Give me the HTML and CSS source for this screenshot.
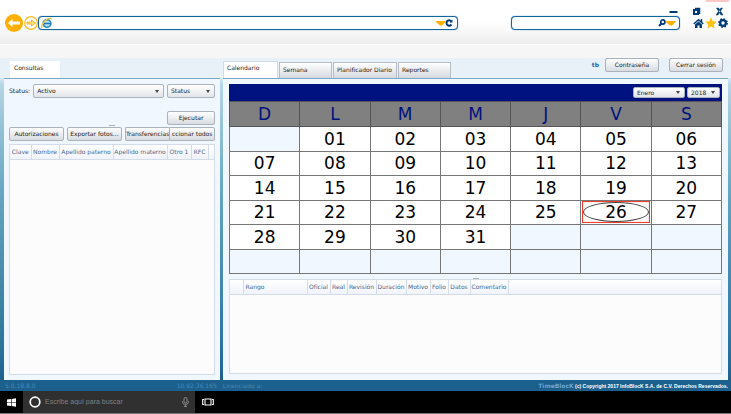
FILE: index.html
```html
<!DOCTYPE html>
<html lang="es">
<head>
<meta charset="utf-8">
<title>TimeBlocK</title>
<link rel="stylesheet" href="styles.css">
</head>
<body>
<header class="browser">
  <div class="window-buttons">
    <button aria-label="Minimizar"><svg width="9" height="9" viewBox="0 0 9 9"><path d="M.5 5h8" stroke="#003b77" stroke-width="2"/></svg></button>
    <button aria-label="Restaurar"><svg width="9" height="9" viewBox="0 0 9 9"><path d="M3 1.500h4.500V7" fill="none" stroke="#003b77" stroke-width="1.500"/><rect x="2" y="3" width="4" height="4" fill="#fff" stroke="#003b77" stroke-width="2"/></svg></button>
    <button aria-label="Cerrar"><svg width="9" height="9" viewBox="0 0 9 9"><path d="M1.500 1h2L8 8H6zM7.500 1h-1.500L1 8h2z" fill="#003b77" stroke="#003b77" stroke-width=".5"/></svg></button>
  </div>
  <nav class="nav">
    <button aria-label="Atrás"><svg width="18" height="18" viewBox="0 0 18 18"><circle cx="9" cy="9" r="9" fill="#ffb000"/><path d="M3 9l4.500-4v2.500H15v3H7.500V13z" fill="#fff"/></svg></button>
    <button aria-label="Adelante"><svg width="14" height="14" viewBox="0 0 14 14"><circle cx="7" cy="7" r="6.300" fill="#fff" stroke="#ffb91e" stroke-width="1.200"/><path d="M3 6h4.500V4l4 3-4 3V8H3z" fill="#ffe08a" stroke="#f5aa00" stroke-width=".8"/></svg></button>
    <label class="address">
      <svg width="12" height="12" viewBox="0 0 12 12"><circle cx="6" cy="6.500" r="3.800" fill="#b8e2f7" stroke="#2b8fd0" stroke-width="1.800"/><path d="M3 6.500h6.500" stroke="#2177b8" stroke-width="1.500"/><path d="M1 11C-.5 8 5 .5 10.500 1.500" fill="none" stroke="#e9c53b" stroke-width="1.300"/></svg>
      <input type="text" aria-label="Dirección">
      <svg width="17" height="10" viewBox="0 0 17 10"><path d="M0 3h9.500v1L6 7.500H4L0 4z" fill="#ffb000"/><path d="M15.500 3.500C13.500 1.300 10.500 2.500 10.500 5s3 3.800 5 1.500" fill="none" stroke="#003b77" stroke-width="2"/><path d="M13.500 4.500h3V1.800z" fill="#003b77"/></svg>
    </label>
    <label class="search">
      <input type="text" aria-label="Buscar">
      <svg width="18" height="10" viewBox="0 0 18 10"><circle cx="4.800" cy="4" r="2.100" fill="#fff" stroke="#003b77" stroke-width="1.700"/><path d="M3.500 5.500L1 8" stroke="#003b77" stroke-width="2"/><path d="M8 3h9.500v1L14 7.500h-2L8 4z" fill="#ffb000"/></svg>
    </label>
    <div class="tools">
      <button aria-label="Inicio"><svg width="11" height="11" viewBox="0 0 11 11"><path d="M.7 6L5.500 1.800 10.300 6M8.500 1v3" fill="none" stroke="#003b77" stroke-width="1.500"/><path d="M2 6.500l3.500-3 3.500 3V10H6.500V7.500h-2V10H2z" fill="#003b77"/></svg></button>
      <button aria-label="Favoritos"><svg width="12" height="12" viewBox="0 0 12 12"><path d="M6 .3l1.700 3.900 4.200.4-3.200 2.800.9 4.200L6 9.400l-3.600 2.200.9-4.200L.1 4.600l4.200-.4z" fill="#ffc20e"/></svg></button>
      <button aria-label="Configuración"><svg width="10" height="10" viewBox="0 0 10 10"><circle cx="5" cy="5" r="4" fill="none" stroke="#003b77" stroke-width="1.800" stroke-dasharray="1.600 1.542"/><circle cx="5" cy="5" r="2.800" fill="#fff" stroke="#003b77" stroke-width="2.200"/></svg></button>
    </div>
  </nav>
</header>
<div class="toolbar"></div>

<main class="app">
  <div class="columns">
    <section class="left">
      <div class="tabs"><button class="tab active query-tab">Consultas</button></div>
      <div class="panel">
        <div class="filters">
          <label for="estado">Status:</label>
          <span class="drop wide"><select id="estado"><option>Activo</option></select></span>
          <span class="drop"><select aria-label="Tipo"><option>Status</option></select></span>
        </div>
        <div class="run"><button class="btn">Ejecutar</button></div>
        <i class="grip"></i>
        <div class="actions">
          <button class="btn">Autorizaciones</button>
          <button class="btn">Exportar fotos...</button>
          <div class="joined"><button class="btn">Transferencias</button><button class="btn">ccionar todos</button></div>
        </div>
        <div class="list">
          <table>
            <colgroup><col class="w21"><col class="w28"><col class="w54"><col class="w54"><col class="w24"><col class="w17"><col></colgroup>
            <thead><tr><th>Clave</th><th>Nombre</th><th>Apellido paterno</th><th>Apellido materno</th><th>Otro 1</th><th>RFC</th><th></th></tr></thead>
          </table>
        </div>
      </div>
    </section>
    <section class="right">
      <div class="tabs">
        <button class="tab active">Calendario</button><button class="tab">Semana</button><button class="tab planner">Planificador Diario</button><button class="tab">Reportes</button>
        <div class="session"><span class="user">tb</span><button class="btn">Contraseña</button><button class="btn">Cerrar sesión</button></div>
      </div>
      <div class="panel">
        <div class="calendar">
          <div class="month">
            <span class="drop"><select class="month-select" aria-label="Mes"><option>Enero</option></select></span>
            <span class="drop"><select class="year-select" aria-label="Año"><option>2018</option></select></span>
          </div>
          <table>
            <thead><tr><th>D</th><th>L</th><th>M</th><th>M</th><th>J</th><th>V</th><th>S</th></tr></thead>
            <tbody>
              <tr><td></td><td>01</td><td>02</td><td>03</td><td>04</td><td>05</td><td>06</td></tr>
              <tr><td>07</td><td>08</td><td>09</td><td>10</td><td>11</td><td>12</td><td>13</td></tr>
              <tr><td>14</td><td>15</td><td>16</td><td>17</td><td>18</td><td>19</td><td>20</td></tr>
              <tr><td>21</td><td>22</td><td>23</td><td>24</td><td>25</td><td><div class="today"><span>26</span></div></td><td>27</td></tr>
              <tr><td>28</td><td>29</td><td>30</td><td>31</td><td></td><td></td><td></td></tr>
              <tr><td></td><td></td><td></td><td></td><td></td><td></td><td></td></tr>
            </tbody>
          </table>
        </div>
        <i class="grip"></i>
        <div class="list">
          <table>
            <colgroup><col class="w13"><col class="w64"><col class="w23"><col class="w17"><col class="w29"><col class="w30"><col class="w24"><col class="w18"><col class="w22"><col class="w38"><col></colgroup>
            <thead><tr><th></th><th class="range">Rango</th><th>Oficial</th><th>Real</th><th>Revisión</th><th>Duración</th><th>Motivo</th><th>Folio</th><th>Datos</th><th>Comentario</th><th></th></tr></thead>
          </table>
        </div>
      </div>
    </section>
  </div>
  <footer class="status">
    <div class="status-left"><span>5.0.18.8.0</span><span>10.92.36.165</span></div>
    <span>Licenciado a:</span>
    <p><b>TimeBlocK</b> (c) Copyright 2017 InfoBlocK S.A. de C.V. Derechos Reservados.</p>
  </footer>
</main>

<div class="taskbar">
  <button class="start" aria-label="Inicio de Windows"><svg width="9" height="9" viewBox="0 0 9 9"><path d="M0 1.500L4 1v3.200H0zM4.600.9L9 .3v3.900H4.600zM0 4.800h4V8l-4-.5zM4.600 4.800H9v3.900L4.600 8z" fill="#fff"/></svg></button>
  <label class="cortana">
    <svg width="12" height="12" viewBox="0 0 12 12"><circle cx="6" cy="6" r="4.800" fill="none" stroke="#fff" stroke-width="1.700"/></svg>
    <input type="text" placeholder="Escribe aquí para buscar" aria-label="Buscar en Windows">
    <svg width="7" height="10" viewBox="0 0 7 10"><rect x="2" y=".5" width="3" height="5.500" rx="1.500" fill="none" stroke="#999" stroke-width=".9"/><path d="M.7 4v1.500q0 2 2.800 2t2.800-2V4M3.500 7.500v2M2 9.500h3" fill="none" stroke="#999" stroke-width=".8"/></svg>
  </label>
  <button class="views" aria-label="Vista de tareas"><svg width="12" height="8" viewBox="0 0 12 8"><path d="M3 1h6v6H3zM2 1.500H.7v5H2M10 1.500h1.300v5H10" fill="none" stroke="#fff" stroke-width="1.100"/></svg></button>
</div>
</body>
</html>
```
FILE: styles.css
```css
* { box-sizing: border-box; }
body {
  margin: 0;
  min-height: 100vh;
  display: flex;
  flex-direction: column;
  font: 6px/8px "DejaVu Sans", sans-serif;
  color: #222;
  background: #fff;
}
button, input, select { font: inherit; color: inherit; margin: 0; padding: 0; border: 0; background: none; }
svg { display: block; flex: none; }

.browser { height: 44px; padding: 7px 3px 0 5px; background: linear-gradient(#fff 50%, #ededed); position: relative; }
.browser::after { content: ""; position: absolute; top: 0; right: 2px; width: 23px; height: 2px; background: #fbc8c8; }
.window-buttons { display: flex; justify-content: flex-end; gap: 14px; height: 7px; padding-right: 4px; }
.nav { display: flex; align-items: center; height: 18px; }
.nav > button + button { margin-left: 1px; }
.address, .search { display: flex; align-items: center; height: 14px; border: 1px solid #11669b; border-radius: 4px; background: #fff; box-shadow: 0 0 1px #11669b; }
.address { flex: 424; padding: 0 4px 0 2px; }
.search { flex: 165; margin-left: 53px; padding: 0 3px; }
.address input, .search input { flex: 1; min-width: 0; }
.tools { display: flex; align-items: center; gap: 1px; margin-left: 13px; }
.toolbar { height: 14px; border-top: 1px solid #fff; background: #f6f6f6; }

.app { flex: 1; display: flex; flex-direction: column; background: linear-gradient(#e8f1f8 5%, #b5d6e5 8%, #78b1ca 32%, #5fa0be 45%, #2f769e 85%, #195b89); }
.columns { flex: 1; display: flex; gap: 3px; padding: 0 3px 0 4px; background: linear-gradient(#e8f1f8, #e8f1f8) top / 100% 20px no-repeat; }
.left { flex: 216; display: flex; flex-direction: column; min-width: 0; }
.right { flex: 505; display: flex; flex-direction: column; min-width: 0; }
.tabs { display: flex; align-items: flex-end; gap: 1px; height: 20px; }
.tab { height: 16px; min-width: 53px; padding: 0 3px 1px; text-align: left; border: 1px solid #b5bdc6; border-bottom: 0; background: linear-gradient(#fff, #d5d9de); }
.tab.active { height: 17px; min-width: 55px; padding-bottom: 4px; background: #fff; border-color: #d2dbe3; }
.planner { min-width: 64px; }
.query-tab { margin-left: 6px; }
.left .tab.active { min-width: 50px; border-color: #fff; }
.session { display: flex; align-items: center; gap: 10px; margin-left: auto; padding-right: 5px; height: 20px; padding-bottom: 6px; }
.session .btn { width: 54px; }
.session .user { color: #1b659b; font-weight: bold; margin-right: -4px; }
.panel { flex: 1; display: flex; flex-direction: column; padding: 5px 6px 6px; background: #f0f7ff; border-top: 1px solid #78a9c5; }
.left .panel { padding: 5px; }

.btn { height: 14px; border: 1px solid #aab2bb; border-radius: 2px; background: linear-gradient(#fff, #d8dce1); white-space: nowrap; overflow: hidden; }
.drop { position: relative; display: block; }
.drop::after { content: ""; position: absolute; right: 5px; top: 6px; border: 2px solid transparent; border-top: 3px solid #444; border-bottom: 0; }
.drop select { appearance: none; display: block; width: 48px; height: 14px; padding: 0 3px; border: 1px solid #aab2bb; border-radius: 2px; background: linear-gradient(#fff, #e2e5e9); }
.filters { display: flex; align-items: center; gap: 3px; }
.filters .wide { flex: 1; }
.wide select { width: 100%; }
.run { display: flex; justify-content: flex-end; margin-top: 13px; }
.run .btn { width: 48px; }
.grip { width: 6px; height: 1px; margin: 0 auto; background: #aab2bb; }
.actions { display: flex; gap: 3px; margin-top: 1px; }
.actions > .btn { flex: 54; min-width: 0; padding: 0; }
.joined { flex: 92; display: flex; min-width: 0; }
.joined .btn { flex: 1; min-width: 0; padding: 0; }
.joined .btn:first-child { border-right: 0; border-radius: 2px 0 0 2px; }
.joined .btn:last-child { border-radius: 0 2px 2px 0; }

.list { flex: 1; border: 1px solid #d3dce8; background: #fcfcfc; }
.left .list { margin-top: 3px; }
.list table { width: 100%; table-layout: fixed; border-collapse: collapse; }
.list th { height: 14px; padding: 0; font-weight: normal; color: #4c6689; white-space: nowrap; border-right: 1px solid #d3dce8; border-bottom: 1px solid #d3dce8; background: linear-gradient(#fff, #f0f3fa); }
.list th:last-child { border-right: 0; }
.list .range { text-align: left; padding-left: 2px; }
.w13 { width: 13px; } .w17 { width: 17px; } .w18 { width: 18px; } .w21 { width: 21px; } .w22 { width: 22px; }
.w23 { width: 23px; } .w24 { width: 24px; } .w28 { width: 28px; } .w29 { width: 29px; } .w30 { width: 30px; }
.w38 { width: 38px; } .w54 { width: 54px; } .w64 { width: 64px; }

.calendar .month { display: flex; align-items: center; justify-content: flex-end; gap: 2px; height: 17px; padding-right: 2px; background: #001180; }
.month .drop select { height: 11px; }
.month .drop::after { top: 4px; }
.month .drop .month-select { width: 52px; }
.month .drop .year-select { width: 33px; }
.calendar table { width: 100%; height: 173px; table-layout: fixed; border-collapse: collapse; font-size: 17px; line-height: 20px; }
.calendar th, .calendar td { padding: 0; border: 1px solid #777; text-align: center; }
.calendar th { height: 25px; color: #001180; background: #808080; font-weight: normal; border-color: #555; }
.calendar td { height: 24px; color: #000; background: #fff; }
.calendar td:empty { background: #f0f7ff; }
.today { margin: 0 1px; height: 22px; border: 1px solid #f0402c; box-shadow: inset 0 0 1px #f0402c; }
.today span { display: block; height: 20px; border: 1px solid #444; border-radius: 50%; line-height: 18px; }
.right .grip { margin: 4px auto 0; }

.status { display: flex; height: 11px; align-items: center; padding: 0 3px 0 5px; color: #4689b5; background: #1c608e; }
.status-left { flex: 213; display: flex; justify-content: space-between; margin-right: 6px; }
.status p { flex: 508; margin: 0; text-align: right; color: #fff; font: bold 5px/8px "Liberation Sans", sans-serif; }
.status p b { color: #68a5d5; font: bold 6px/8px "DejaVu Sans", sans-serif; }
.status > span { width: 0; white-space: nowrap; }

.taskbar { display: flex; height: 23px; background: #000; border-bottom: 1px solid #777; }
.start { width: 23px; display: grid; place-items: center; }
.cortana { width: 172px; display: flex; align-items: center; gap: 4px; padding: 0 6px; background: #303030; font: 7px/10px "Liberation Sans", sans-serif; }
.cortana input { flex: 1; min-width: 0; }
.cortana input::placeholder { color: #808080; opacity: 1; }
.views { width: 26px; display: grid; place-items: center; }
```
